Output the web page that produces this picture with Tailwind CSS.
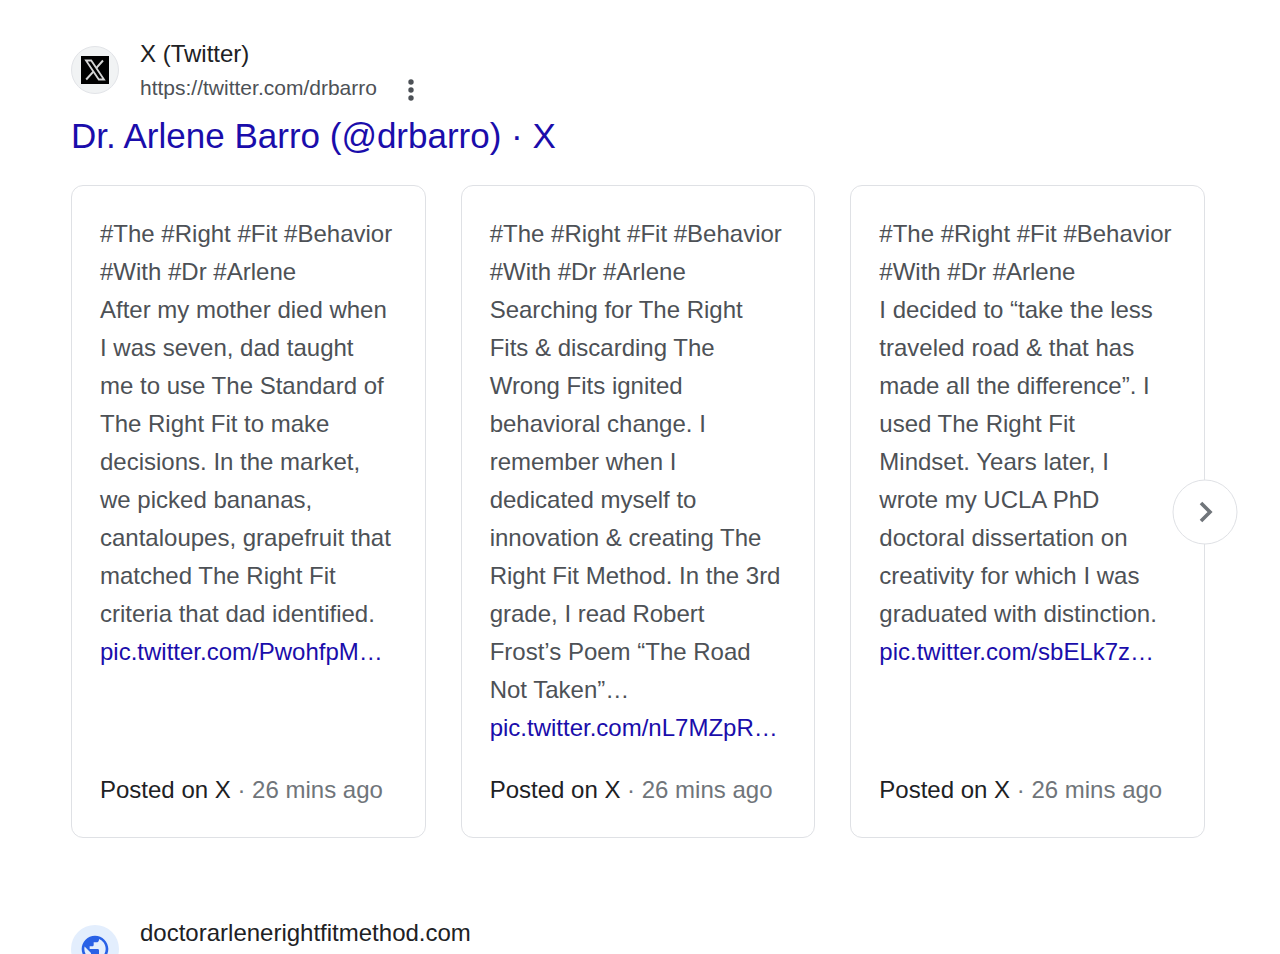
<!DOCTYPE html>
<html lang="en">
<head>
  <meta charset="UTF-8" />
  <meta name="viewport" content="width=device-width, initial-scale=1.0"/>
  <title>Dr. Arlene Barro - Search</title>
  <script src="https://cdn.jsdelivr.net/npm/@tailwindcss/browser@4"></script>
</head>
<body class="bg-white font-['Liberation_Sans',Arial,sans-serif] text-[#202124] overflow-x-hidden">

  <main class="pl-[71px] pr-[75px] pt-9">

    <!-- X result -->
    <section>
      <div class="flex items-start">
        <div class="mt-[10px] flex size-12 shrink-0 items-center justify-center rounded-full border border-[#e2e4e8] bg-[#f1f3f4]">
          <svg class="size-7" viewBox="0 0 28 28" fill="none" aria-hidden="true">
            <rect width="28" height="28" fill="#000"/>
            <path d="M5 4.500h5.200L23 23.500h-5.200Z" stroke="#d4d4d4" stroke-width="1.8"/>
            <path d="M22 4.500 15.200 12.200M12.600 15.400 5.200 23.500" stroke="#d4d4d4" stroke-width="2"/>
          </svg>
        </div>
        <div class="ml-[21px]">
          <p class="text-2xl leading-9">X (Twitter)</p>
          <div class="flex items-center">
            <cite class="text-[21px] leading-8 text-[#4d5156] not-italic">https://twitter.com/drbarro</cite>
            <button class="ml-6 mt-1 flex h-6 w-5 items-center justify-center text-[#4d5156]" aria-label="About this result">
              <svg class="h-6 w-2" viewBox="0 0 8 24" fill="currentColor"><circle cx="4" cy="4" r="2.7"/><circle cx="4" cy="12" r="2.7"/><circle cx="4" cy="20" r="2.7"/></svg>
            </button>
          </div>
        </div>
      </div>

      <h3 class="mt-2 text-[35px] leading-12 text-[#1a0dab]"><a href="#">Dr. Arlene Barro (@drbarro) · X</a></h3>

      <!-- Posts carousel -->
      <div class="relative mt-[25px]">
        <div class="grid grid-cols-3 gap-[35px] text-2xl leading-[38px]">

          <article class="flex flex-col justify-between gap-6 rounded-xl border border-[#dfe1e5] pt-[29px] pb-7 pl-7 pr-5">
            <p class="text-[#4d5156]">
              #The #Right #Fit #Behavior<br>
              #With #Dr #Arlene<br>
              After my mother died when<br>
              I was seven, dad taught<br>
              me to use The Standard of<br>
              The Right Fit to make<br>
              decisions. In the market,<br>
              we picked bananas,<br>
              cantaloupes, grapefruit that<br>
              matched The Right Fit<br>
              criteria that dad identified.<br>
              <a href="#" class="text-[#1a0dab]">pic.twitter.com/PwohfpM…</a>
            </p>
            <p class="text-[#70757a]"><span class="text-[#202124]">Posted on X</span> · 26 mins ago</p>
          </article>

          <article class="flex flex-col justify-between gap-6 rounded-xl border border-[#dfe1e5] pt-[29px] pb-7 pl-7 pr-5">
            <p class="text-[#4d5156]">
              #The #Right #Fit #Behavior<br>
              #With #Dr #Arlene<br>
              Searching for The Right<br>
              Fits &amp; discarding The<br>
              Wrong Fits ignited<br>
              behavioral change. I<br>
              remember when I<br>
              dedicated myself to<br>
              innovation &amp; creating The<br>
              Right Fit Method. In the 3rd<br>
              grade, I read Robert<br>
              Frost’s Poem “The Road<br>
              Not Taken”…<br>
              <a href="#" class="text-[#1a0dab]">pic.twitter.com/nL7MZpR…</a>
            </p>
            <p class="text-[#70757a]"><span class="text-[#202124]">Posted on X</span> · 26 mins ago</p>
          </article>

          <article class="flex flex-col justify-between gap-6 rounded-xl border border-[#dfe1e5] pt-[29px] pb-7 pl-7 pr-5">
            <p class="text-[#4d5156]">
              #The #Right #Fit #Behavior<br>
              #With #Dr #Arlene<br>
              I decided to “take the less<br>
              traveled road &amp; that has<br>
              made all the difference”. I<br>
              used The Right Fit<br>
              Mindset. Years later, I<br>
              wrote my UCLA PhD<br>
              doctoral dissertation on<br>
              creativity for which I was<br>
              graduated with distinction.<br>
              <a href="#" class="text-[#1a0dab]">pic.twitter.com/sbELk7z…</a>
            </p>
            <p class="text-[#70757a]"><span class="text-[#202124]">Posted on X</span> · 26 mins ago</p>
          </article>

        </div>

        <button class="absolute top-1/2 right-0 flex size-[65px] translate-x-1/2 -translate-y-1/2 items-center justify-center rounded-full border border-[#dfe1e5] bg-white text-[#70757a]" aria-label="Next">
          <svg class="size-6" viewBox="0 0 24 24" fill="none" stroke="currentColor" stroke-width="3.6"><path d="m7.500 3.500 9 9-9 9"/></svg>
        </button>
      </div>
    </section>

    <!-- Website result -->
    <section class="mt-[77px] flex h-[39px] items-start overflow-hidden">
      <div class="mt-[10px] flex size-12 shrink-0 items-center justify-center rounded-full bg-[#e3eefd]">
        <svg class="size-8" viewBox="0 0 24 24" fill="#2961e6" aria-hidden="true">
          <path d="M12 2C6.480 2 2 6.480 2 12s4.480 10 10 10 10-4.480 10-10S17.520 2 12 2zm-1 17.930c-3.950-.49-7-3.850-7-7.930 0-.62.08-1.210.21-1.790L9 15v1c0 1.100.9 2 2 2v1.930zm6.900-2.540c-.26-.81-1-1.390-1.900-1.390h-1v-3c0-.55-.45-1-1-1H8v-2h2c.55 0 1-.45 1-1V7h2c1.100 0 2-.9 2-2v-.41c2.930 1.190 5 4.060 5 7.410 0 2.080-.8 3.970-2.100 5.390z"/>
        </svg>
      </div>
      <a href="#" class="ml-[21px] text-2xl leading-9">doctorarlenerightfitmethod.com</a>
    </section>

  </main>

</body>
</html>
